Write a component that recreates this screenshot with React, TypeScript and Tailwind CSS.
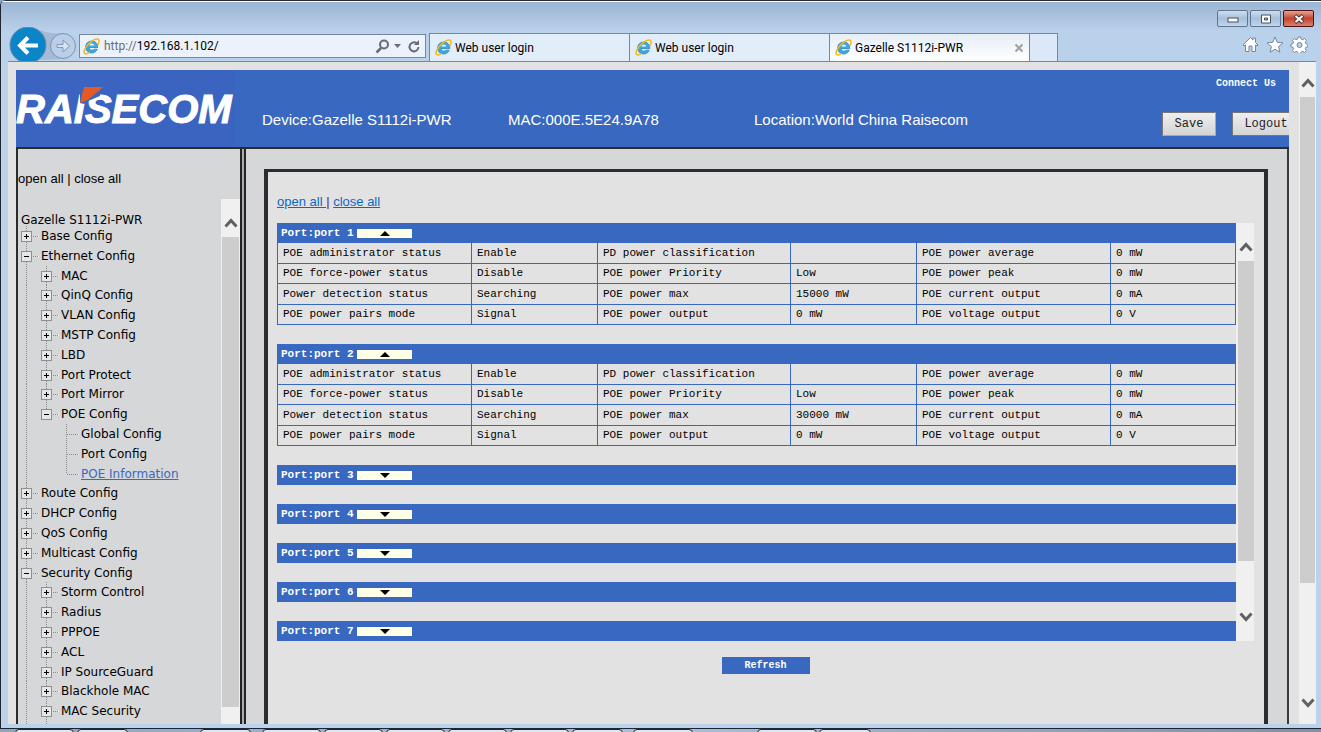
import { useState } from "react";
import clsx from "clsx";

type TreeRow = {
  label: string;
  level: 1 | 2 | 3;
  state: "open" | "closed" | "leaf";
  active?: boolean;
  last?: boolean;
};

const TREE: TreeRow[] = [
  { label: "Base Config", level: 1, state: "closed" },
  { label: "Ethernet Config", level: 1, state: "open" },
  { label: "MAC", level: 2, state: "closed" },
  { label: "QinQ Config", level: 2, state: "closed" },
  { label: "VLAN Config", level: 2, state: "closed" },
  { label: "MSTP Config", level: 2, state: "closed" },
  { label: "LBD", level: 2, state: "closed" },
  { label: "Port Protect", level: 2, state: "closed" },
  { label: "Port Mirror", level: 2, state: "closed" },
  { label: "POE Config", level: 2, state: "open", last: true },
  { label: "Global Config", level: 3, state: "leaf" },
  { label: "Port Config", level: 3, state: "leaf" },
  { label: "POE Information", level: 3, state: "leaf", active: true, last: true },
  { label: "Route Config", level: 1, state: "closed" },
  { label: "DHCP Config", level: 1, state: "closed" },
  { label: "QoS Config", level: 1, state: "closed" },
  { label: "Multicast Config", level: 1, state: "closed" },
  { label: "Security Config", level: 1, state: "open" },
  { label: "Storm Control", level: 2, state: "closed" },
  { label: "Radius", level: 2, state: "closed" },
  { label: "PPPOE", level: 2, state: "closed" },
  { label: "ACL", level: 2, state: "closed" },
  { label: "IP SourceGuard", level: 2, state: "closed" },
  { label: "Blackhole MAC", level: 2, state: "closed" },
  { label: "MAC Security", level: 2, state: "closed" },
];

const POWER_MAX: Record<number, string> = { 1: "15000 mW", 2: "30000 mW" };

function portRows(port: number): string[][] {
  return [
    ["POE administrator status", "Enable", "PD power classification", "", "POE power average", "0 mW"],
    ["POE force-power status", "Disable", "POE power Priority", "Low", "POE power peak", "0 mW"],
    ["Power detection status", "Searching", "POE power max", POWER_MAX[port] ?? "15000 mW", "POE current output", "0 mA"],
    ["POE power pairs mode", "Signal", "POE power output", "0 mW", "POE voltage output", "0 V"],
  ];
}

const TASKBAR = [
  "ml-[15px] w-[59px]",
  "ml-[3px] w-[51px]",
  "ml-[72px] w-[51px]",
  "ml-[11px] w-[59px]",
  "ml-[3px] w-[59px]",
  "ml-[3px] w-[59px]",
  "ml-[3px] w-[59px]",
  "ml-[3px] w-[59px]",
  "ml-[3px] w-[51px]",
  "ml-[10px] w-[60px]",
  "ml-[64px] w-[60px]",
  "ml-[2px] w-[52px]",
];

function IeIcon() {
  return (
    <svg width="17" height="17" viewBox="0 0 17 17" fill="none" className="shrink-0" aria-hidden="true">
      <path d="M14.3 11.2C13.3 13.6 11.2 15 8.7 15 5.2 15 2.6 12.4 2.6 9S5.2 3 8.700 3c3.700 0 6.100 2.600 6.100 6.500H6.200c.1 1.600 1.100 2.700 2.600 2.700 1.100 0 1.900-.4 2.400-1z" fill="#3fa9df" stroke="#1d7fbd" strokeWidth=".7" />
      <path d="M6.300 7.500h4.900C11 6.200 10.100 5.400 8.800 5.400S6.600 6.200 6.300 7.500z" fill="#eef6fc" />
      <path d="M15.300 6.300c1-2.600 1-4.500-.2-5.100-1.900-1-6.200 1.100-9.600 4.700C1.900 9.700.2 13.900 1.600 15.400c.8.9 2.600.5 4.700-.7" stroke="#f3b81d" strokeWidth="1.500" strokeLinecap="round" />
    </svg>
  );
}

function Chevron({ down = false }: { down?: boolean }) {
  return (
    <svg width="14" height="10" viewBox="0 0 14 10" fill="none" aria-hidden="true">
      <path d={down ? "M1.500 1.500 7 7.500l5.500-6" : "M1.500 8.500 7 2.500l5.500 6"} stroke="#606060" strokeWidth="3" />
    </svg>
  );
}

function TreeCell({ kind }: { kind: "line" | "blank" | "open" | "closed" | "leaf" | "leaf-last" | "open-last" }) {
  const box = kind === "open" || kind === "closed" || kind === "open-last";
  const half = kind === "leaf-last" || kind === "open-last";
  return (
    <svg width="20" height="20" viewBox="0 0 20 20" fill="none" className="shrink-0" aria-hidden="true">
      {kind !== "blank" && (
        <path d={half ? "M5.500 0V10" : "M5.500 0V20"} stroke="#8b8b8b" strokeDasharray="1 1" />
      )}
      {kind !== "line" && kind !== "blank" && (
        <>
          <path d="M6 10.500H17" stroke="#8b8b8b" strokeDasharray="1 1" />
          <path d="M17 10.500h1" stroke="#fff" />
        </>
      )}
      {box && (
        <>
          <rect x=".5" y="5.500" width="10" height="10" fill="#e6e6e6" stroke="#8f8f8f" />
          <path d="M3 10.500h5" stroke="#000" />
          {kind === "closed" && <path d="M5.500 8v5" stroke="#000" />}
        </>
      )}
    </svg>
  );
}

function TreeItem({ row }: { row: TreeRow }) {
  let kind: "open" | "closed" | "leaf" | "leaf-last" | "open-last" = row.state;
  if (row.last) kind = row.state === "leaf" ? "leaf-last" : "open-last";
  return (
    <li className="flex items-center min-h-0">
      {row.level > 1 && <TreeCell kind="line" />}
      {row.level > 2 && <TreeCell kind="blank" />}
      <TreeCell kind={kind} />
      <a href="#" className={clsx("whitespace-nowrap", row.active && "text-[#3b68c0] underline")}>
        {row.label}
      </a>
    </li>
  );
}

function Logo() {
  return (
    <div className="relative w-[218px] shrink-0 h-full bg-[#3a64c0] flex items-center">
      <span className="font-['Liberation_Sans',Arial,sans-serif] font-bold italic text-[40px] leading-none text-white [-webkit-text-stroke:1px_white]">RAISECOM</span>
      <svg className="absolute left-[62px] top-4" width="26" height="18" viewBox="0 0 26 18" aria-hidden="true">
        <path d="M2 17V8h20v2L10 15 6 18z" fill="#3a64c0" />
        <path d="M6 1h19L10 14 2 17z" fill="#e35b22" />
      </svg>
    </div>
  );
}

function BrowserChrome() {
  return (
    <header className="h-[62px] shrink-0 border-t border-[#2a2a33] bg-linear-to-b from-[#9ab4d3] to-[#bad1eb] to-50% font-[Roboto,sans-serif] text-xs">
      <div className="h-[26px] border-t border-white pt-2 pr-[7px] flex justify-end gap-[2px]">
        <button aria-label="Minimize" className="w-[31px] h-[17px] rounded-xs border border-[#5f7692] bg-linear-to-b from-[#d0deee] via-[#a7bfdb] via-50% to-[#c0d6ee] flex items-end justify-center pb-[3px]">
          <svg width="12" height="6" viewBox="0 0 12 6"><rect x="1" y="1" width="10" height="4" fill="#fff" stroke="#4b4f5a" /></svg>
        </button>
        <button aria-label="Maximize" className="w-[31px] h-[17px] rounded-xs border border-[#5f7692] bg-linear-to-b from-[#d0deee] via-[#a7bfdb] via-50% to-[#c0d6ee] flex items-center justify-center">
          <svg width="12" height="10" viewBox="0 0 12 10"><path d="M1.500 1h9v8h-9zM4.500 4v2h3V4z" fill="#fff" fillRule="evenodd" stroke="#4b4f5a" /></svg>
        </button>
        <button aria-label="Close" className="w-[31px] h-[17px] rounded-xs border border-[#4a1015] bg-linear-to-b from-[#e4a294] via-[#c14530] via-50% to-[#d9806a] flex items-center justify-center">
          <svg width="12" height="10" viewBox="0 0 12 10" fill="none">
            <path d="M2 1.500l8 7M10 1.500l-8 7" stroke="#57343a" strokeWidth="4" />
            <path d="M2.500 2l7 6M9.500 2l-7 6" stroke="#fff" strokeWidth="2" />
          </svg>
        </button>
      </div>
      <div className="h-[35px] ml-[7px] mr-[5px] border-b border-[#76889f] flex items-end overflow-hidden">
        <div className="self-start flex items-center shrink-0 w-[71px]">
          <svg width="69" height="37" viewBox="0 0 69 37" fill="none" aria-label="Back and forward">
            <path d="M22 1C34 2 38 8 56 6L54 32 30 33z" fill="#a4bad5" />
            <circle cx="20" cy="18" r="18" fill="#0a85c7" stroke="#6e8aa8" />
            <path d="M30 18.500H13M20 10.500l-8 8 8 8" stroke="#fff" strokeWidth="4" />
            <circle cx="55" cy="19" r="12.500" fill="#b9cfe9" stroke="#7f93ad" />
            <path d="M49 17.500h6v-4.500l6.500 6-6.500 6v-4.500h-6z" fill="#d5e2f2" stroke="#8497af" />
          </svg>
        </div>
        <div className="w-[347px] h-6 mb-[3px] border border-[#76889f] bg-[#ebf2fb] flex items-center px-[3px] shrink-0">
          <IeIcon />
          <label htmlFor="address" className="ml-1 text-[#6d6d6d]">http://</label>
          <input id="address" defaultValue="192.168.1.102/" className="flex-1 min-w-0 bg-transparent outline-none text-black" />
          <svg width="48" height="16" viewBox="0 0 48 16" fill="none" stroke="#666c76" aria-hidden="true">
            <circle cx="10" cy="6.500" r="4" strokeWidth="2" />
            <path d="M7 10l-4.500 4.500" strokeWidth="2.500" />
            <path d="M20 6h7l-3.500 4z" fill="#666c76" stroke="none" />
            <path d="M43 5.500A4.500 4.500 0 1 0 44.500 9" strokeWidth="2" />
            <path d="M45 2v5h-5z" fill="#666c76" stroke="none" />
          </svg>
        </div>
        <nav className="ml-[3px] flex h-7 border-l border-t border-[#76889f] text-black">
          {["Web user login", "Web user login", "Gazelle S1112i-PWR"].map((title, i) => (
            <a
              key={i}
              href="#"
              className={clsx(
                "w-[200px] border-r border-[#76889f] flex items-center gap-[3px] pl-[5px] pr-[5px]",
                i === 2 ? "bg-linear-to-b from-[#e6eef7] to-white" : "bg-[#e1edf9]",
              )}
            >
              <IeIcon />
              <span className="flex-1 whitespace-nowrap">{title}</span>
              {i === 2 && (
                <svg width="10" height="10" viewBox="0 0 10 10" fill="none" aria-hidden="true">
                  <path d="M1.500 1.500l7 7M8.500 1.500l-7 7" stroke="#a0a0a0" strokeWidth="2" />
                </svg>
              )}
            </a>
          ))}
          <button aria-label="New tab" className="w-7 border-r border-[#76889f] bg-[#dbe8f7]" />
        </nav>
        <svg className="ml-auto mr-2 mb-2 shrink-0" width="66" height="17" viewBox="0 0 66 17" fill="#fff" stroke="#74879f" aria-label="Home, favorites, tools">
          <path d="M1 9 8.500 1.500 11 4V2h2.500v4.500L16 9l-1 1-1.500-1v6.500h-3.500V10H7v5.500H3.500V9L2 10z" />
          <path d="M33 1l2.200 5.300 5.800.5-4.400 3.800 1.300 5.600L33 13.200l-4.900 3 1.300-5.600L25 6.800l5.800-.5z" />
          <path
            d="M56.700 1h2.600l.4 2 1.600.7 1.800-1.200 1.900 1.900-1.200 1.800.7 1.500 2 .5v2.600l-2 .4-.7 1.600 1.200 1.800-1.900 1.900-1.800-1.200-1.600.7-.4 2h-2.600l-.4-2-1.600-.7-1.800 1.200-1.900-1.900 1.200-1.800-.7-1.600-2-.4V8.200l2-.5.7-1.500L51 4.400l1.900-1.900 1.800 1.200 1.600-.7z"
            transform="translate(-.6 0)"
          />
          <circle cx="57.500" cy="9" r="2.500" fill="#bad1eb" />
        </svg>
      </div>
    </header>
  );
}

function BannerHeader() {
  return (
    <div className="h-[79px] shrink-0 bg-[#3868bf] border-b-2 border-[#2c2c30] flex text-white">
      <Logo />
      <div className="flex-1 min-w-0 pt-6 pl-7 flex items-center font-['Liberation_Sans',Arial,sans-serif] text-[15px] whitespace-nowrap">
        <span className="w-[246px]">Device:Gazelle S1112i-PWR</span>
        <span className="w-[246px]">MAC:000E.5E24.9A78</span>
        <span>Location:World China Raisecom</span>
      </div>
      <div className="w-[127px] shrink-0 overflow-hidden font-['Liberation_Mono',monospace]">
        <div className="h-[42px] pt-2 pr-[13px] text-right text-[10px] leading-3 font-bold">
          <a href="#">Connect Us</a>
        </div>
        <div className="flex gap-4 text-xs text-[#222]">
          <button className="w-[54px] h-6 shrink-0 border border-[#777] border-r-[#aaa] border-b-[#aaa] bg-linear-to-b from-[#efefef] to-[#d4d4d4]">Save</button>
          <button className="w-[68px] h-6 shrink-0 border border-[#777] bg-linear-to-b from-[#efefef] to-[#d4d4d4]">Logout</button>
        </div>
      </div>
    </div>
  );
}

function Sidebar() {
  return (
    <aside className="w-[224px] shrink-0 border-l-2 border-[#2b2b2b] bg-[#d5d7d9] flex flex-col">
      <div className="h-[50px] shrink-0 pt-5 font-['Liberation_Sans',Arial,sans-serif] text-[13px] leading-5">
        <a href="#">open all</a> | <a href="#">close all</a>
      </div>
      <div className="flex-1 min-h-0 flex">
        <div className="flex-1 min-w-0 pl-[3px] pt-[15px] overflow-hidden font-['DejaVu_Sans',Verdana,sans-serif] text-xs">
          <div className="h-3 leading-3 whitespace-nowrap">Gazelle S1112i-PWR</div>
          <ul className="h-[515px] grid auto-rows-fr">
            {TREE.map((row) => (
              <TreeItem key={row.label} row={row} />
            ))}
            <li className="flex">
              <TreeCell kind="line" />
              <TreeCell kind="line" />
            </li>
          </ul>
        </div>
        <div className="w-[19px] bg-[#f0f0f0] flex flex-col items-center px-px pt-[19px] pb-[17px]">
          <Chevron />
          <div className="mt-[9px] w-full flex-1 bg-[#cdcdcd]" />
        </div>
      </div>
    </aside>
  );
}

function PortSection({ port, open, onToggle }: { port: number; open: boolean; onToggle: () => void }) {
  return (
    <section>
      <div className="h-5 pt-px pl-1 bg-[#3868bf] flex items-center">
        <h2 className="w-[76px] text-[11px] font-bold text-white whitespace-nowrap">Port:port {port}</h2>
        <button
          onClick={onToggle}
          aria-label={`Toggle port ${port}`}
          aria-expanded={open}
          className="w-[55px] h-[9px] bg-[#ffffe8] flex items-center justify-center"
        >
          <svg width="10" height="5" viewBox="0 0 10 5" aria-hidden="true">
            <path d={open ? "M0 5 5 0l5 5z" : "M0 0h10L5 5z"} />
          </svg>
        </button>
      </div>
      {open && (
        <table className="w-full h-[82px] table-fixed border-separate border-spacing-0 border-l border-[#3868bf] text-[11px] leading-3">
          <colgroup>
            <col className="w-[194px]" />
            <col className="w-[126px]" />
            <col className="w-[193px]" />
            <col className="w-[126px]" />
            <col className="w-[194px]" />
            <col />
          </colgroup>
          <tbody>
            {portRows(port).map((cells) => (
              <tr key={cells[0]}>
                {cells.map((cell, i) => (
                  <td key={i} className="border-r border-b border-[#3868bf] pl-[5px] whitespace-nowrap">
                    {cell}
                  </td>
                ))}
              </tr>
            ))}
          </tbody>
        </table>
      )}
    </section>
  );
}

function PoeInformation() {
  const [expanded, setExpanded] = useState<number[]>([1, 2]);

  const toggle = (port: number) => {
    setExpanded((prev) => (prev.includes(port) ? prev.filter((p) => p !== port) : [...prev, port]));
  };

  return (
    <main className="flex-1 min-w-0 border-x-4 border-t-[3px] border-[#2d2d2f] bg-[#e2e2e2] pl-[9px] pr-[10px] pt-5">
      <div className="h-[31px] font-['Liberation_Sans',Arial,sans-serif] text-[13px] leading-5 text-[#0b68c8]">
        <a href="#" className="underline whitespace-pre">open all </a>
        <span className="text-[#551a55]">|</span>{" "}
        <a href="#" className="underline">close all</a>
      </div>
      <div className="h-[418px] flex font-['Liberation_Mono',monospace]">
        <div className="flex-1 min-w-0 overflow-hidden flex flex-col gap-[19px]">
          {[1, 2, 3, 4, 5, 6, 7].map((port) => (
            <PortSection key={port} port={port} open={expanded.includes(port)} onToggle={() => toggle(port)} />
          ))}
        </div>
        <div className="w-[18px] bg-[#f0f0f0] flex flex-col items-center pl-[2px] pt-[19px] pb-[19px]">
          <Chevron />
          <div className="mt-[9px] mb-[51px] w-full flex-1 bg-[#cdcdcd]" />
          <Chevron down />
        </div>
      </div>
      <div className="mt-4 flex justify-center">
        <button className="w-[88px] h-[17px] bg-[#3868bf] text-white font-['Liberation_Mono',monospace] text-[10px] leading-3 font-bold">
          Refresh
        </button>
      </div>
    </main>
  );
}

export default function App() {
  return (
    <div className="h-screen flex flex-col overflow-hidden bg-[#8ea6c6] text-black">
      <div className="flex-1 min-h-0 flex flex-col border-l border-b border-[#20242c] bg-[#bad2ec] rounded-tl-md overflow-hidden">
        <BrowserChrome />
        <div className="flex-1 min-h-0 pl-[7px] pr-[5px] pb-1 flex">
          <div className="flex-1 min-w-0 bg-[#e2e2e2] pt-2 pl-2 pr-[10px] flex flex-col overflow-hidden">
            <BannerHeader />
            <div className="flex-1 min-h-0 flex">
              <Sidebar />
              <div className="w-[6px] shrink-0 border-x-2 border-[#242424] bg-[#a9abad]" />
              <div className="flex-1 min-w-0 border-r-2 border-[#38383a] bg-[#d5d7d9] pt-5 pl-[18px] pr-[19px] flex">
                <PoeInformation />
              </div>
            </div>
          </div>
          <div className="w-[17px] bg-[#f0f0f0] flex flex-col items-center px-px pt-4 pb-4">
            <Chevron />
            <div className="mt-[9px] mb-[115px] w-full flex-1 bg-[#cdcdcd]" />
            <Chevron down />
          </div>
        </div>
      </div>
      <div className="h-[3px] shrink-0 flex overflow-hidden bg-linear-to-r from-[#8ea6c6] via-[#a8c0e0] to-[#7f90a8]">
        {TASKBAR.map((segment, i) => (
          <div key={i} className={clsx("h-2 shrink-0 rounded-t-sm border border-[#20242c] bg-[#dce7f5]", segment)} />
        ))}
      </div>
    </div>
  );
}
